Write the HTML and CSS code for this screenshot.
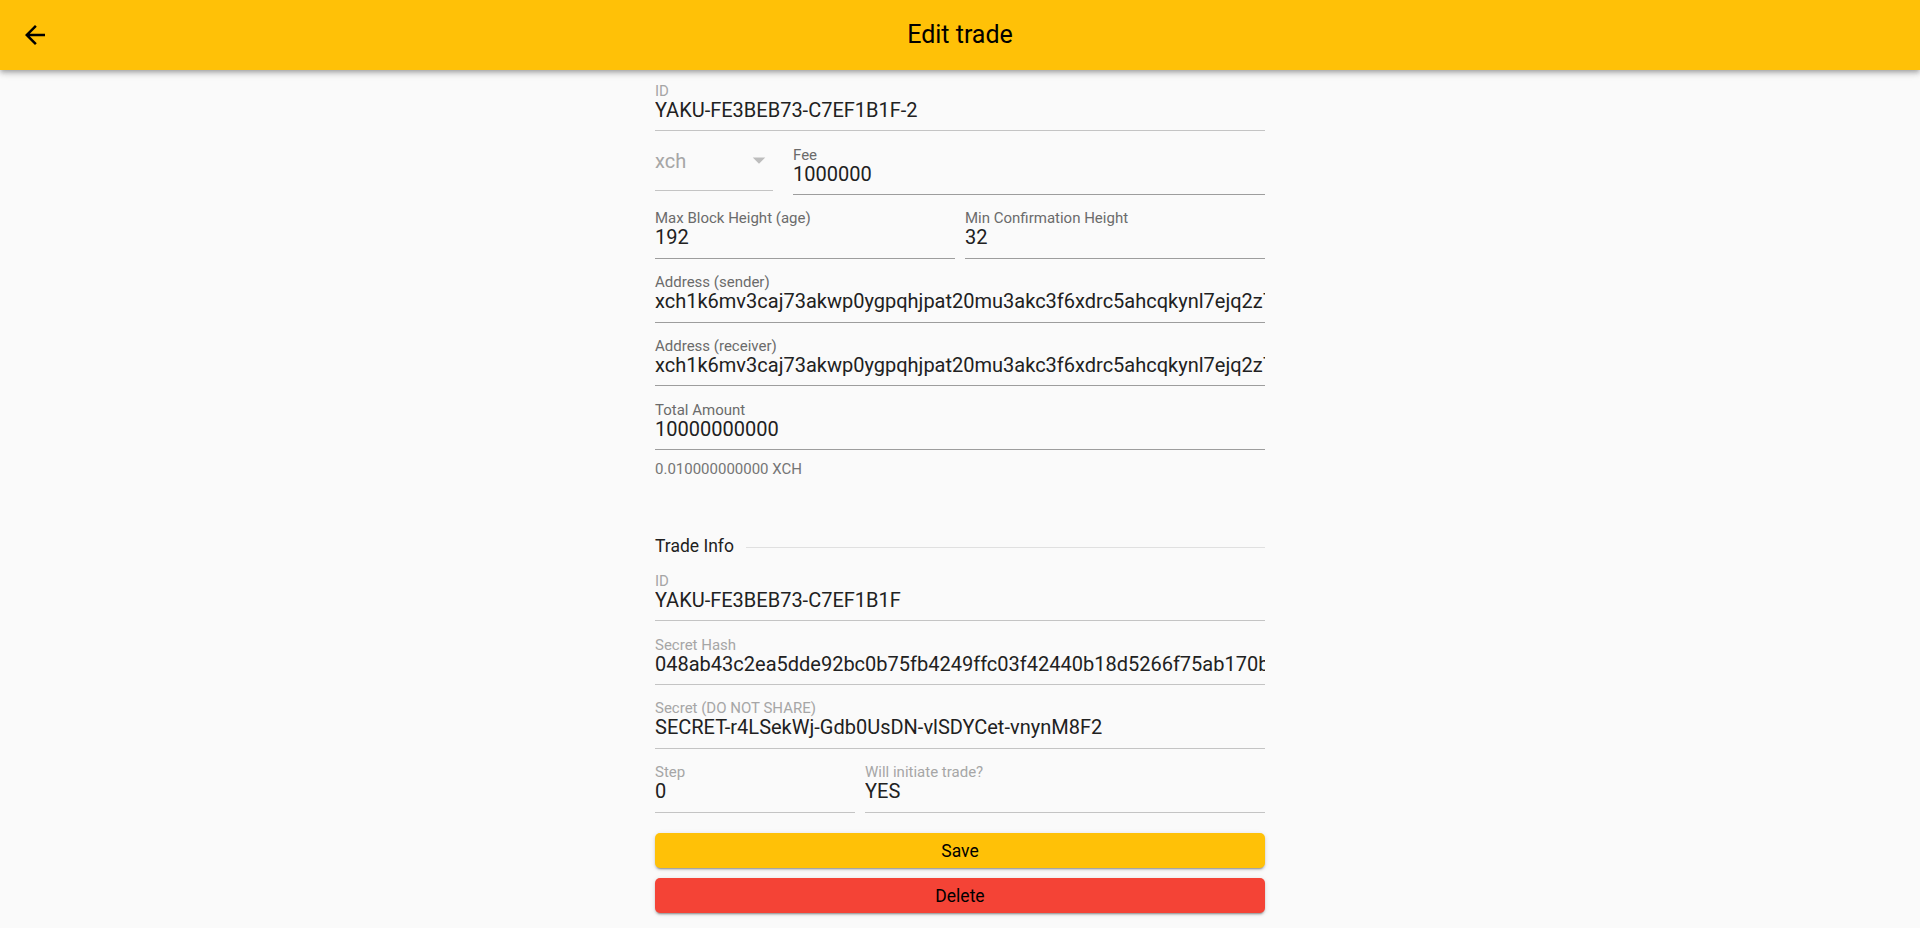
FILE: index.html
```html
<!DOCTYPE html>
<html lang="en">
<head>
<meta charset="utf-8">
<title>Edit trade</title>
<link rel="stylesheet" href="styles.css">
</head>
<body>
<header class="appbar">
  <button class="back" aria-label="Back">
    <svg viewBox="0 0 24 24" width="30" height="30"><path d="M20 11H7.83l5.59-5.59L12 4l-8 8 8 8 1.41-1.41L7.83 13H20v-2z" fill="#000"/></svg>
  </button>
  <h1 class="title">Edit trade</h1>
  <span class="spacer"></span>
</header>
<main class="page">
  <form class="form">
    <div class="fields">
      <div class="field disabled">
        <label class="label">ID</label>
        <div class="value">YAKU-FE3BEB73-C7EF1B1F-2</div>
      </div>
      <div class="row row-fee">
        <div class="dropdown">
          <span class="dd-text">xch</span>
          <svg class="dd-arrow" viewBox="0 0 24 24" width="30" height="30"><path d="M7 10l5 5 5-5z" fill="#bdbdbd"/></svg>
        </div>
        <div class="field grow">
          <label class="label">Fee</label>
          <div class="value">1000000</div>
        </div>
      </div>
      <div class="row row-half">
        <div class="field">
          <label class="label">Max Block Height (age)</label>
          <div class="value">192</div>
        </div>
        <div class="field">
          <label class="label">Min Confirmation Height</label>
          <div class="value">32</div>
        </div>
      </div>
      <div class="field">
        <label class="label">Address (sender)</label>
        <div class="value">xch1k6mv3caj73akwp0ygpqhjpat20mu3akc3f6xdrc5ahcqkynl7ejq2z7qsmm8kz</div>
      </div>
      <div class="field">
        <label class="label">Address (receiver)</label>
        <div class="value">xch1k6mv3caj73akwp0ygpqhjpat20mu3akc3f6xdrc5ahcqkynl7ejq2z7qsmm8kz</div>
      </div>
      <div class="field">
        <label class="label">Total Amount</label>
        <div class="value">10000000000</div>
      </div>
    </div>
    <p class="helper">0.010000000000 XCH</p>

    <div class="section">
      <span class="section-title">Trade Info</span>
      <span class="section-line"></span>
    </div>

    <div class="fields">
      <div class="field disabled">
        <label class="label">ID</label>
        <div class="value">YAKU-FE3BEB73-C7EF1B1F</div>
      </div>
      <div class="field disabled">
        <label class="label">Secret Hash</label>
        <div class="value">048ab43c2ea5dde92bc0b75fb4249ffc03f42440b18d5266f75ab170b3f2e9a1</div>
      </div>
      <div class="field disabled">
        <label class="label">Secret (DO NOT SHARE)</label>
        <div class="value">SECRET-r4LSekWj-Gdb0UsDN-vlSDYCet-vnynM8F2</div>
      </div>
      <div class="row row-step">
        <div class="field disabled step">
          <label class="label">Step</label>
          <div class="value">0</div>
        </div>
        <div class="field disabled grow">
          <label class="label">Will initiate trade?</label>
          <div class="value">YES</div>
        </div>
      </div>
    </div>

    <div class="actions">
      <button type="button" class="btn btn-save">Save</button>
      <button type="button" class="btn btn-delete">Delete</button>
    </div>
  </form>
</main>
</body>
</html>
```
FILE: styles.css
```css
html, body {
  margin: 0;
  padding: 0;
  height: 100%;
  overflow: hidden;
}

body {
  background: #fafafa;
  font-family: Roboto, "Noto Sans", "Liberation Sans", sans-serif;
  color: #212121;
}

.appbar {
  height: 70px;
  background: #ffc107;
  display: grid;
  grid-template-columns: 70px 1fr 70px;
  align-items: center;
  padding: 0 0 0 20px;
  box-sizing: border-box;
  box-shadow: 0 2px 4px -1px rgba(0,0,0,.2), 0 4px 5px 0 rgba(0,0,0,.14), 0 1px 10px 0 rgba(0,0,0,.12);
  position: relative;
  z-index: 1;
}

.back {
  width: 30px;
  height: 30px;
  padding: 0;
  border: 0;
  background: none;
  display: flex;
  cursor: pointer;
}

.title {
  margin: 0;
  text-align: center;
  font-size: 25px;
  font-weight: 400;
  color: #000;
  line-height: 30px;
  padding-right: 20px;
}

.page {
  display: flex;
  justify-content: center;
}

.form {
  width: 610px;
  display: flex;
  flex-direction: column;
}

.fields {
  display: flex;
  flex-direction: column;
  gap: 2.6px;
}

.field {
  height: 61.2px;
  box-sizing: border-box;
  padding: 13.8px 0 0;
  border-bottom: 1px solid #9d9d9d;
  min-width: 0;
}

.field.disabled {
  border-bottom-color: #c4c4c4;
}

.label {
  display: block;
  height: 14px;
  font-size: 15px;
  line-height: 14px;
  color: #6b6b6b;
  white-space: nowrap;
}

.field.disabled .label {
  color: #a6a6a6;
}

.value {
  height: 24px;
  font-size: 20px;
  line-height: 24px;
  color: #212121;
  white-space: nowrap;
  overflow: hidden;
}

.row {
  display: flex;
  align-items: flex-start;
}

.row-half {
  gap: 10px;
}

.row-half .field {
  flex: 1 1 0;
}

.row-fee {
  gap: 20px;
}

.grow {
  flex: 1 1 0;
}

.dropdown {
  width: 118px;
  height: 57px;
  box-sizing: border-box;
  border-bottom: 1px solid #c4c4c4;
  display: flex;
  align-items: flex-start;
  justify-content: space-between;
}

.dd-text {
  font-size: 20px;
  line-height: 24px;
  color: #a6a6a6;
  margin-top: 15px;
}

.dd-arrow {
  margin-right: -1px;
  margin-top: 11px;
}

.row-step {
  gap: 10px;
}

.step {
  width: 200px;
  flex: none;
}

.helper {
  margin: 10px 0 0;
  font-size: 15px;
  line-height: 18px;
  color: #757575;
}

.section {
  margin-top: 58px;
  margin-bottom: 3px;
  height: 21px;
  display: flex;
  align-items: center;
  gap: 12px;
}

.section-title {
  font-size: 17.5px;
  line-height: 21px;
  color: #212121;
}

.section-line {
  flex: 1;
  height: 1px;
  background: #e0e0e0;
  margin-top: 1px;
}

.actions {
  display: flex;
  flex-direction: column;
  gap: 10px;
  margin-top: 20.5px;
}

.btn {
  height: 35px;
  border: 0;
  border-radius: 5px;
  font-family: inherit;
  font-size: 17.5px;
  color: #000;
  cursor: pointer;
  box-shadow: 0 3px 1px -2px rgba(0,0,0,.2), 0 2px 2px 0 rgba(0,0,0,.14), 0 1px 5px 0 rgba(0,0,0,.12);
}

.btn-save {
  background: #ffc107;
}

.btn-delete {
  background: #f44336;
}
```
